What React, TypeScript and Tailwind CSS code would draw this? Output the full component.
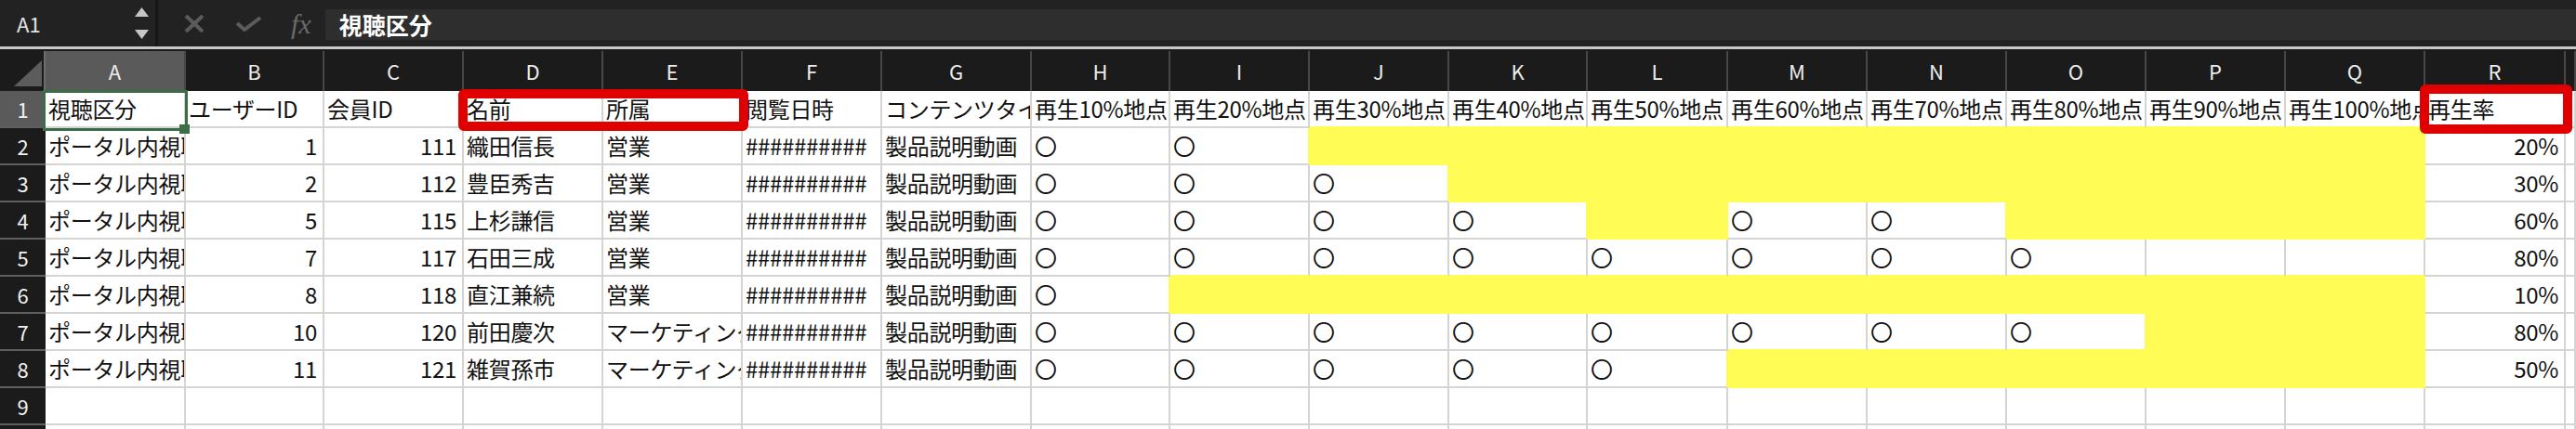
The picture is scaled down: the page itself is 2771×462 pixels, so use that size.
import React from "react";

type Cell = { text: string; right?: boolean; fill?: boolean };

const COLUMNS =
  "grid grid-cols-[49px_151px_149px_150px_150px_150px_150px_161px_149px_150px_150px_149px_151px_150px_150px_150px_150px_150px_151px_11px]";

const LETTERS = ["A", "B", "C", "D", "E", "F", "G", "H", "I", "J", "K", "L", "M", "N", "O", "P", "Q", "R", ""];

const HEADINGS = [
  "視聴区分",
  "ユーザーID",
  "会員ID",
  "名前",
  "所属",
  "閲覧日時",
  "コンテンツタイトル",
  ...[10, 20, 30, 40, 50, 60, 70, 80, 90, 100].map((p) => `再生${p}%地点`),
  "再生率",
];

// o = watched, y = not reached (highlighted), - = blank
const RECORDS = [
  { user: 1, member: 111, name: "織田信長", dept: "営業", marks: "ooyyyyyyyy", rate: "20%" },
  { user: 2, member: 112, name: "豊臣秀吉", dept: "営業", marks: "oooyyyyyyy", rate: "30%" },
  { user: 5, member: 115, name: "上杉謙信", dept: "営業", marks: "ooooyooyyy", rate: "60%" },
  { user: 7, member: 117, name: "石田三成", dept: "営業", marks: "oooooooo--", rate: "80%" },
  { user: 8, member: 118, name: "直江兼続", dept: "営業", marks: "oyyyyyyyyy", rate: "10%" },
  { user: 10, member: 120, name: "前田慶次", dept: "マーケティング", marks: "ooooooooyy", rate: "80%" },
  { user: 11, member: 121, name: "雑賀孫市", dept: "マーケティング", marks: "oooooyyyyy", rate: "50%" },
];

const blank = (): Cell => ({ text: "" });

const TABLE: Cell[][] = [
  [...HEADINGS.map((text) => ({ text })), blank()],
  ...RECORDS.map((r) => [
    { text: "ポータル内視聴" },
    { text: String(r.user), right: true },
    { text: String(r.member), right: true },
    { text: r.name },
    { text: r.dept },
    { text: "##########" },
    { text: "製品説明動画" },
    ...r.marks.split("").map((m) => ({ text: m === "o" ? "〇" : "", fill: m === "y" })),
    { text: r.rate, right: true },
    blank(),
  ]),
  Array.from({ length: 19 }, blank),
  Array.from({ length: 19 }, blank),
];

function FormulaBar() {
  return (
    <div className="flex h-[50px] bg-[#222222]">
      <div className="flex h-full w-[167px] items-center justify-between pl-[18px] pr-[7px]">
        <span className="text-[22px] text-[#e2e2e2]">A1</span>
        <div className="flex flex-col gap-[14px]">
          <svg width="15" height="10" viewBox="0 0 15 10">
            <polygon points="7.5,0 15,10 0,10" fill="#c6c6c6" />
          </svg>
          <svg width="15" height="10" viewBox="0 0 15 10">
            <polygon points="0,0 15,0 7.5,10" fill="#c6c6c6" />
          </svg>
        </div>
      </div>
      <div className="h-full w-[3px] bg-[#171717]" />
      <div className="ml-[28px] flex items-center">
        <svg width="22" height="19" viewBox="0 0 22 19">
          <path d="M2 1 L20 18 M20 1 L2 18" stroke="#5b5b5b" strokeWidth="4" />
        </svg>
      </div>
      <div className="ml-[33px] flex items-center">
        <svg width="29" height="17" viewBox="0 0 29 17">
          <path d="M2 8 L10 15 L27 2" stroke="#5b5b5b" strokeWidth="4" fill="none" />
        </svg>
      </div>
      <div className="ml-[31px] flex items-center font-['Liberation_Serif',serif] text-[30px] italic text-[#6a6a6a]">
        fx
      </div>
      <div className="ml-[15px] mt-[10px] flex h-[33px] flex-1 items-center bg-[#2e2e2e] pl-[15px] text-[25px] font-bold text-white">
        視聴区分
      </div>
    </div>
  );
}

function Corner() {
  return (
    <div className="h-[43px] border-r-2 border-r-[#6e6e6e] bg-[#1b1b1b]">
      <svg width="47" height="43" viewBox="0 0 47 43">
        <polygon points="45,10 45,38 15,38" fill="#5c5c5c" />
      </svg>
    </div>
  );
}

function GridCell({ cell, rightFill, belowFill, selected }: { cell: Cell; rightFill: boolean; belowFill: boolean; selected: boolean }) {
  const bg = cell.fill ? "bg-[#fffc55]" : "bg-white";
  const rb = cell.fill || rightFill ? "border-r-[#fffc55]" : "border-r-[#d4d4d4]";
  const bb = cell.fill || belowFill ? "border-b-[#fffc55]" : "border-b-[#d4d4d4]";
  return (
    <div className={`relative h-[40px] border-r-2 border-b-2 ${bg} ${rb} ${bb}`}>
      <div
        className={`h-full overflow-hidden whitespace-nowrap leading-[38px] tracking-[-0.3px] ${
          cell.right ? "pr-[6px] text-right" : "pl-[3px]"
        }`}
      >
        {cell.text}
      </div>
      {selected && (
        <>
          <div className="absolute left-[-3px] top-[-1px] z-10 h-[44px] w-[156px] border-[3px] border-[#3b6e47]" />
          <div className="absolute left-[144px] top-[36px] z-10 h-[10px] w-[11px] bg-[#3b6e47]" />
        </>
      )}
    </div>
  );
}

function Sheet() {
  return (
    <div className="relative bg-[#1b1b1b] pt-[2px]">
      <div className={COLUMNS}>
        <Corner />
        {LETTERS.map((l, i) => (
          <div
            key={i}
            className={`flex h-[43px] items-center justify-center border-r-2 border-r-[#474747] text-[22px] text-[#ececec] ${
              i === 0 ? "bg-[#5a5a5a]" : "bg-[#1b1b1b]"
            }`}
          >
            {l}
          </div>
        ))}
        {TABLE.map((row, r) => (
          <React.Fragment key={r}>
            <div
              className={`flex h-[40px] items-center justify-center border-b-2 border-b-[#5e5e5e] text-[22px] text-[#f0f0f0] ${
                r === 0 ? "bg-[#5a5a5a]" : "bg-[#1b1b1b]"
              }`}
            >
              {r + 1}
            </div>
            {row.map((cell, c) => (
              <GridCell
                key={c}
                cell={cell}
                rightFill={!!row[c + 1]?.fill}
                belowFill={!!TABLE[r + 1]?.[c]?.fill}
                selected={r === 0 && c === 0}
              />
            ))}
          </React.Fragment>
        ))}
      </div>

      {/* red marker boxes */}
      <div className="absolute left-[493px] top-[43px] z-20 h-[45px] w-[312px] rounded-[6px] border-[10px] border-[#e10000]" />
      <div className="absolute left-[2603px] top-[38px] z-20 h-[53px] w-[164px] rounded-[6px] border-[10px] border-[#e10000]" />
    </div>
  );
}

export default function App() {
  return (
    <div className="h-[462px] w-[2771px] overflow-hidden bg-[#222222] font-['Noto_Sans_CJK_JP',sans-serif] text-[24px] text-[#111111]">
      <FormulaBar />
      <div className="h-[3px] bg-[#c8c8c8]" />
      <Sheet />
    </div>
  );
}
